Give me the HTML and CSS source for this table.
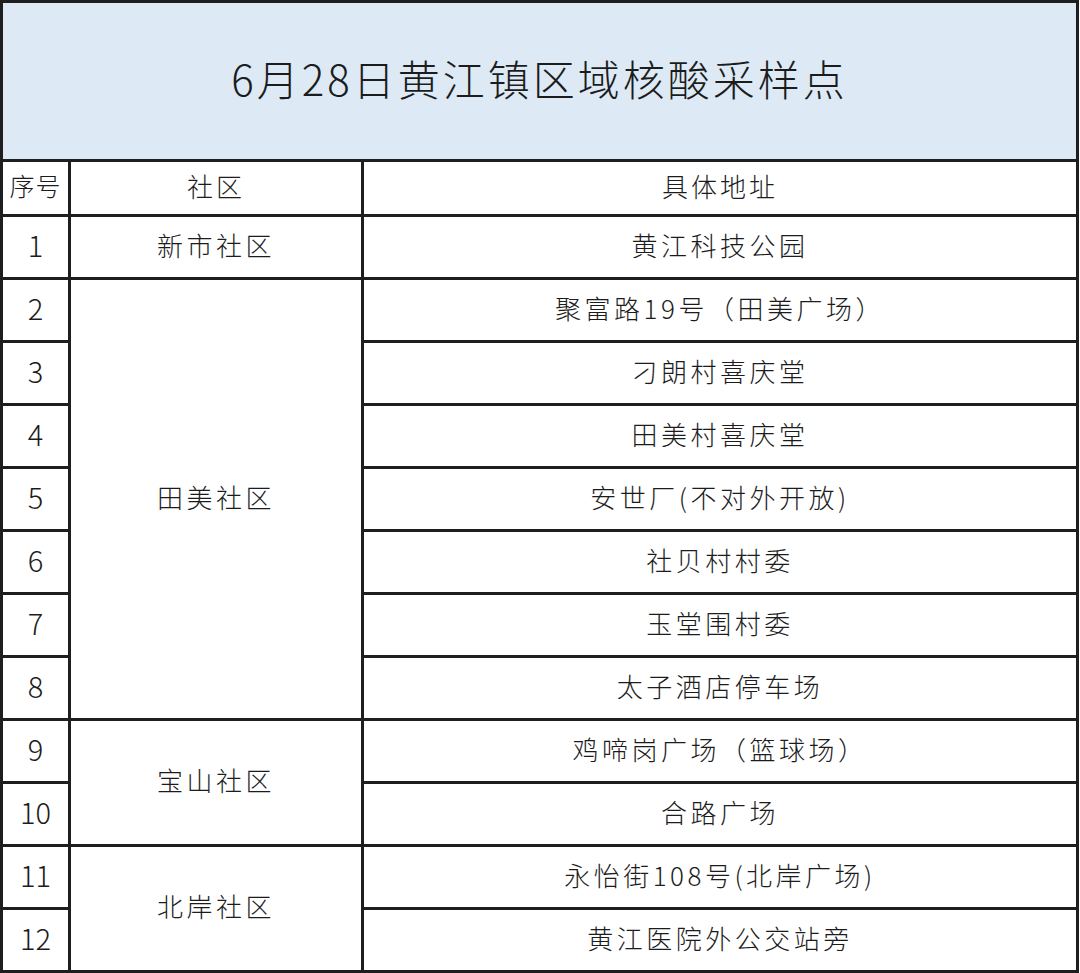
FILE: index.html
```html
<!DOCTYPE html>
<html lang="zh-CN">
<head>
<meta charset="utf-8">
<title>6月28日黄江镇区域核酸采样点</title>
<link rel="stylesheet" href="styles.css">
</head>
<body>
<div class="sheet">
  <div class="cell title">6月28日黄江镇区域核酸采样点</div>

  <div class="cell head num">序号</div>
  <div class="cell head">社区</div>
  <div class="cell head">具体地址</div>

  <div class="cell num">1</div>
  <div class="cell comm">新市社区</div>
  <div class="cell addr">黄江科技公园</div>

  <div class="cell num">2</div>
  <div class="cell comm span7">田美社区</div>
  <div class="cell addr">聚富路19号（田美广场）</div>
  <div class="cell num">3</div>
  <div class="cell addr">刁朗村喜庆堂</div>
  <div class="cell num">4</div>
  <div class="cell addr">田美村喜庆堂</div>
  <div class="cell num">5</div>
  <div class="cell addr">安世厂(不对外开放)</div>
  <div class="cell num">6</div>
  <div class="cell addr">社贝村村委</div>
  <div class="cell num">7</div>
  <div class="cell addr">玉堂围村委</div>
  <div class="cell num">8</div>
  <div class="cell addr">太子酒店停车场</div>

  <div class="cell num">9</div>
  <div class="cell comm span2">宝山社区</div>
  <div class="cell addr">鸡啼岗广场（篮球场）</div>
  <div class="cell num">10</div>
  <div class="cell addr">合路广场</div>

  <div class="cell num">11</div>
  <div class="cell comm span2">北岸社区</div>
  <div class="cell addr">永怡街108号(北岸广场)</div>
  <div class="cell num">12</div>
  <div class="cell addr">黄江医院外公交站旁</div>
</div>
</body>
</html>
```

FILE: styles.css
```css
html, body {
  margin: 0;
  padding: 0;
  background: #ffffff;
}

body {
  font-family: "Noto Sans CJK SC", "Noto Sans", sans-serif;
  font-weight: 300;
  color: #1c1c1c;
}

.sheet {
  width: 1079px;
  display: grid;
  grid-template-columns: 65px 290px 712px;
  grid-template-rows: 156px 52px repeat(12, 60px);
  gap: 3px;
  padding: 3px;
  box-sizing: border-box;
  background: #1e1e1e;
}

.cell {
  background: #ffffff;
  display: flex;
  align-items: center;
  justify-content: center;
  font-size: 26px;
  letter-spacing: 3.5px;
  white-space: nowrap;
  padding-bottom: 6px;
}

.title {
  grid-column: 1 / 4;
  background: #ddeaf6;
  font-size: 42px;
  letter-spacing: 3px;
  padding-bottom: 8px;
}

.head {
  font-size: 26px;
  letter-spacing: 3px;
  padding-bottom: 6px;
}

.num {
  font-size: 29px;
  letter-spacing: 0;
}

.head.num {
  font-size: 25px;
  letter-spacing: 1px;
}

.span7 {
  grid-row: span 7;
}

.span2 {
  grid-row: span 2;
}
```
